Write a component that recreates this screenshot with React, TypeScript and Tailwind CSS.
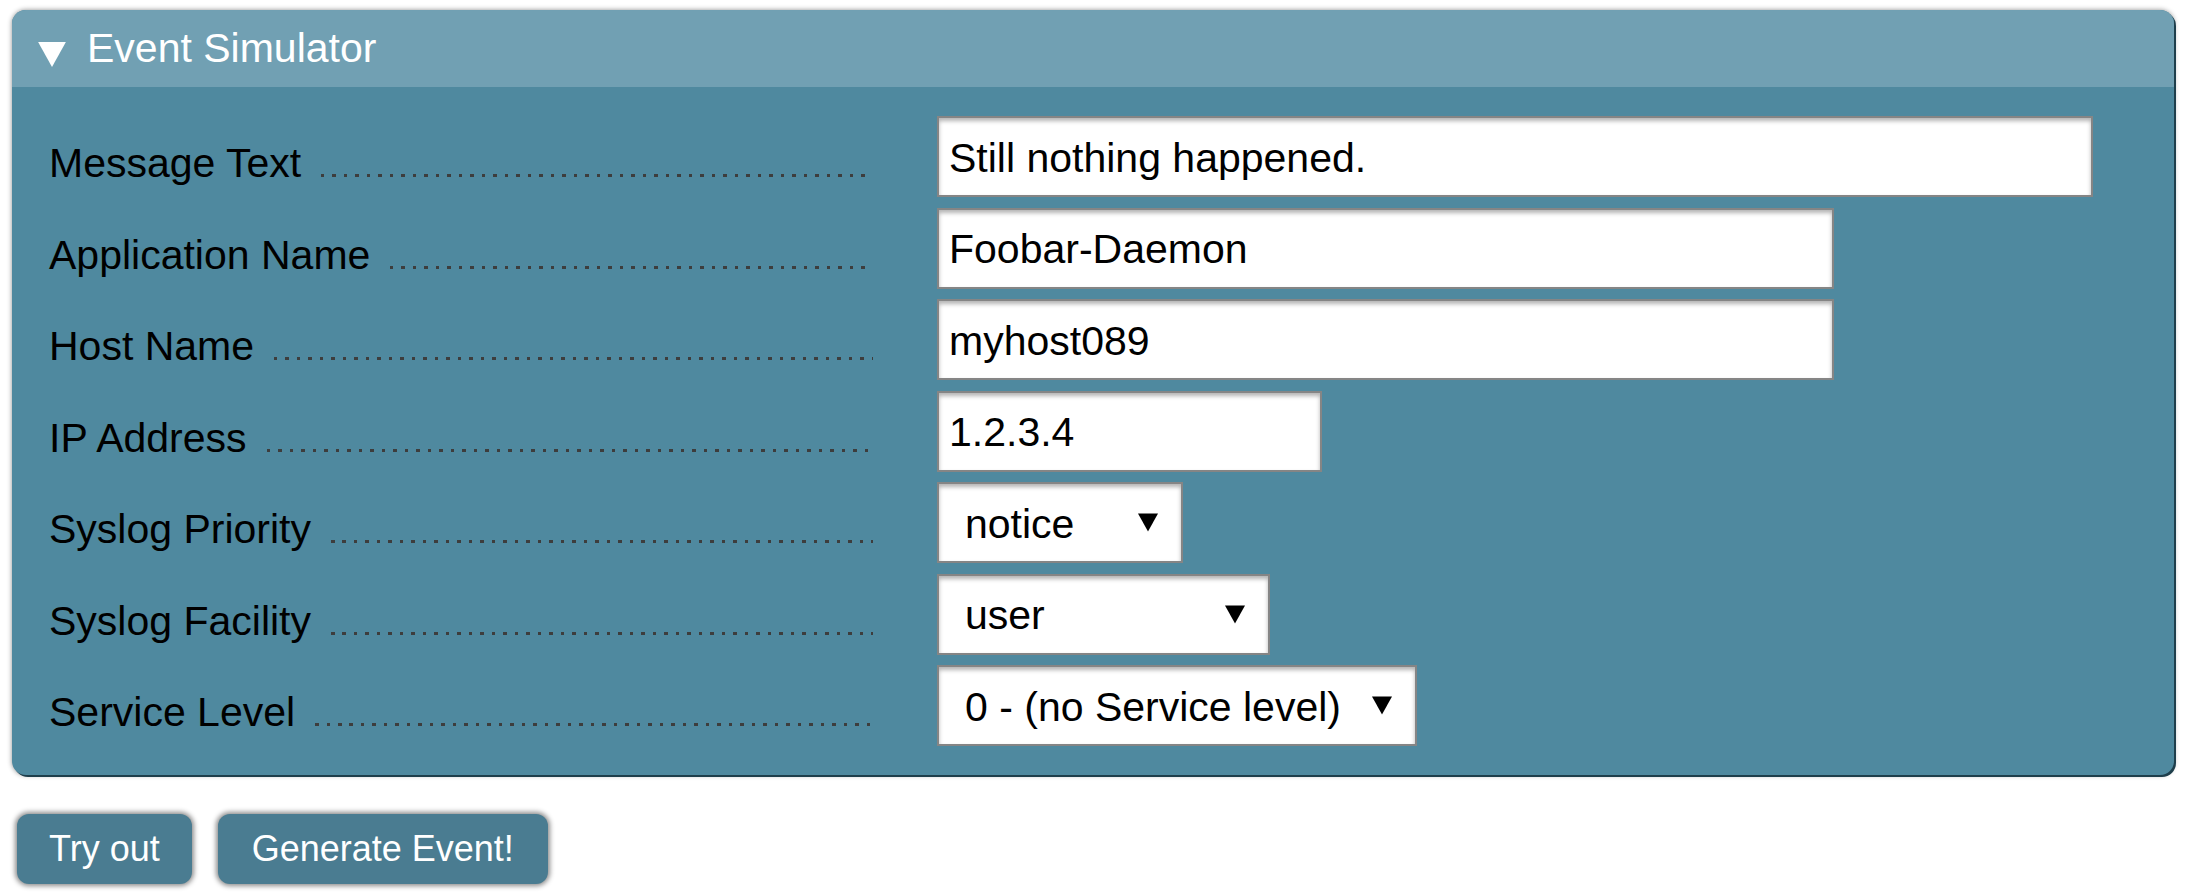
import { useState } from "react";

const font = { fontFamily: '"Liberation Sans", Arial, sans-serif' };

type Field =
  | { label: string; kind: "text"; value: string; width: string }
  | { label: string; kind: "select"; value: string; width: string };

const fields: Field[] = [
  { label: "Message Text", kind: "text", value: "Still nothing happened.", width: "w-[1156px]" },
  { label: "Application Name", kind: "text", value: "Foobar-Daemon", width: "w-[897px]" },
  { label: "Host Name", kind: "text", value: "myhost089", width: "w-[897px]" },
  { label: "IP Address", kind: "text", value: "1.2.3.4", width: "w-[385px]" },
  { label: "Syslog Priority", kind: "select", value: "notice", width: "w-[246px]" },
  { label: "Syslog Facility", kind: "select", value: "user", width: "w-[333px]" },
  { label: "Service Level", kind: "select", value: "0 - (no Service level)", width: "w-[480px]" },
];

function Arrow({ className }: { className?: string }) {
  return (
    <svg viewBox="0 0 20 18" className={className} fill="currentColor">
      <polygon points="0,0 20,0 10,18" />
    </svg>
  );
}

export default function App() {
  const [open, setOpen] = useState(true);
  const [values, setValues] = useState(fields.map((f) => f.value));

  return (
    <div className="min-h-screen bg-white pl-[12px] pr-[12px] pt-[10px]" style={font}>
      {/* Panel */}
      <div className="w-[2162px] rounded-[14px] overflow-hidden bg-[#4f899f] shadow-[2px_2px_0_#1e3e4b,0_0_5px_rgba(0,0,0,0.45)]">
        <button
          onClick={() => setOpen(!open)}
          className="flex items-center w-full h-[77px] bg-[#71a0b3] pl-[25px] text-white text-[41px] text-left"
        >
          <Arrow className="w-[30px] h-[25px] mt-[12px] text-white" />
          <span className="ml-[20px]">Event Simulator</span>
        </button>

        {open && (
          <div className="grid grid-cols-[824px_1fr] gap-x-[64px] gap-y-[10.5px] pl-[37px] pt-[29px] pb-[29px]">
            {fields.map((f, i) => (
              <div key={f.label} className="contents">
                <div className="h-[81px] flex items-center pt-[15px]">
                  <div className="flex items-baseline w-full">
                    <span className="text-[41px] text-black whitespace-nowrap">{f.label}</span>
                    <div className="flex-1 ml-[20px] h-[3px] bg-[repeating-linear-gradient(to_right,#3d3d3d_0_3.5px,transparent_3.5px_11.5px)]" />
                  </div>
                </div>
                {f.kind === "text" ? (
                  <input
                    value={values[i]}
                    onChange={(e) =>
                      setValues((v) => v.map((x, j) => (j === i ? e.target.value : x)))
                    }
                    className={`${f.width} h-[81px] bg-white border-2 border-[#858585] pl-[10px] pt-[3px] text-[41px] text-black outline-none shadow-[inset_0_3px_4px_rgba(0,0,0,0.3)]`}
                    style={font}
                  />
                ) : (
                  <div
                    className={`${f.width} h-[81px] bg-white border-2 border-[#858585] flex items-center justify-between pl-[26px] pr-[23px] shadow-[inset_0_3px_4px_rgba(0,0,0,0.3)]`}
                  >
                    <span className="text-[41px] text-black pt-[4px] whitespace-nowrap">{f.value}</span>
                    <Arrow className="w-[20px] h-[19px] text-black" />
                  </div>
                )}
              </div>
            ))}
          </div>
        )}
      </div>

      {/* Buttons */}
      <div className="flex gap-[26px] mt-[39px] pl-[5px]">
        <button className="h-[70px] px-[32px] rounded-[12px] bg-[#4a7c91] text-white text-[36px] shadow-[0_0_5px_2px_rgba(0,0,0,0.45)]">
          Try out
        </button>
        <button className="h-[70px] px-[34px] rounded-[12px] bg-[#4a7c91] text-white text-[36px] shadow-[0_0_5px_2px_rgba(0,0,0,0.45)]">
          Generate Event!
        </button>
      </div>
    </div>
  );
}
